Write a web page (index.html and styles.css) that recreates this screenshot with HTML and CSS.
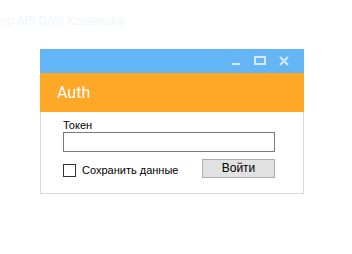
FILE: index.html
```html
<!DOCTYPE html>
<html>
<head>
<meta charset="utf-8">
<link rel="stylesheet" href="styles.css">
</head>
<body>
<div class="ghost">по API QIWI Кошелька</div>
<div class="window">
  <div class="titlebar">
    <svg class="ctl" width="12" height="12" viewBox="0 0 12 12"><rect x="2" y="8" width="8" height="2" fill="#d4e9fb"/></svg>
    <svg class="ctl" width="12" height="12" viewBox="0 0 12 12"><rect x="1" y="2" width="10" height="7" fill="none" stroke="#d4e9fb" stroke-width="2"/></svg>
    <svg class="ctl" width="12" height="12" viewBox="0 0 12 12"><path d="M2 2 L10 10 M10 2 L2 10" stroke="#d4e9fb" stroke-width="2"/></svg>
  </div>
  <div class="header">Auth</div>
  <div class="content">
    <div class="label">Токен</div>
    <div class="input"></div>
    <div class="row">
      <label class="check"><span class="box"></span>Сохранить данные</label>
      <div class="btn">Войти</div>
    </div>
  </div>
</div>
</body>
</html>
```
FILE: styles.css
```css
html, body { margin: 0; padding: 0; background: #fff; }
body { width: 352px; height: 254px; overflow: hidden; font-family: "Liberation Sans", Arial, sans-serif; }
.ghost {
  font-family: Roboto, sans-serif;
  font-size: 12px;
  color: #f1f5fb;
  padding-top: 13px;
  height: 36px;
  box-sizing: border-box;
  line-height: 16px;
}
.window {
  margin-left: 40px;
  margin-top: 13px;
  width: 264px;
  box-sizing: border-box;
  border: 1px solid #dadada;
  border-top: none;
}
.titlebar {
  margin: 0 -1px;
  height: 24px;
  background: #64b5f6;
  display: flex;
  justify-content: flex-end;
  align-items: center;
  gap: 12px;
  padding-right: 14px;
}
.ctl { display: block; }
.header {
  margin: 0 -1px;
  height: 39px;
  background: #ffa726;
  color: #fff;
  font-family: Roboto, sans-serif;
  font-size: 16px;
  padding-left: 17px;
  line-height: 39px;
}
.content {
  padding: 6px 28px 15px 22px;
  font-size: 11px;
  color: #000;
}
.label { line-height: 14px; height: 14px; }
.input {
  height: 20px;
  box-sizing: border-box;
  border: 1px solid #7a7a7a;
  background: #fff;
}
.row {
  margin-top: 7px;
  display: flex;
  justify-content: space-between;
  align-items: center;
}
.check { display: flex; align-items: center; gap: 6px; margin-top: 3px; }
.box {
  width: 13px; height: 13px; box-sizing: border-box;
  border: 1px solid #333; background: #fff;
}
.btn {
  width: 73px; height: 19px; box-sizing: border-box;
  border: 1px solid #adadad; background: #e1e1e1;
  text-align: center; line-height: 17px; font-size: 12px;
}
```
